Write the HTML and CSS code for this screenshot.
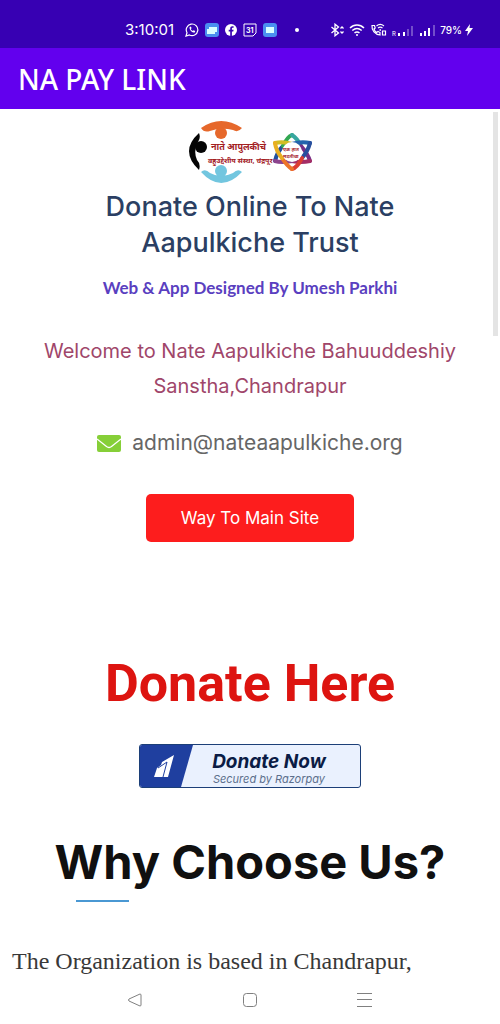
FILE: index.html
```html
<!doctype html>
<html lang="en">
    <head>
        <meta charset="UTF-8" />
        <meta name="viewport" content="width=device-width, initial-scale=1.0" />
        <title>NA PAY LINK</title>
        <link rel="stylesheet" href="styles.css">
    </head>
    <body>
        <div class="statusBar">
            <span class="clock">3:10:01</span>
            <div class="statusGroup">
                <svg width="14" height="14" viewBox="0 0 14 14" fill="none" stroke="#fff">
                    <path d="M1 13l1-3.3A5.8 5.8 0 1 1 4.4 12z" stroke-width="1.2" />
                    <path d="M4.5 4.2c0 3 2.3 5.3 5.3 5.3l.4-1.5-1.6-.8-.8.8c-1-.5-1.5-1-2-2l.8-.8-.7-1.6z" fill="#fff" stroke="none" />
                </svg>
                <svg width="14" height="14" viewBox="0 0 14 14">
                    <rect width="14" height="14" rx="3" fill="#4a8ff0" />
                    <path d="M4 4h8v5h-2v2H2V6h2z" fill="#d9ffff" />
                </svg>
                <svg width="12" height="12" viewBox="0 0 12 12">
                    <circle cx="6" cy="6" r="6" fill="#fff" />
                    <path d="M5.2 12V7.5H3.7V5.8h1.5V4.5c0-1.6.9-2.3 2.2-2.3h1.2v1.5h-.8c-.7 0-.9.3-.9.9v1.2h1.7l-.3 1.7H6.9V12z" fill="#3700b3" />
                </svg>
                <svg width="14" height="14" viewBox="0 0 14 14">
                    <path d="M1 1h12v9l-3 3H1z" fill="none" stroke="#fff" />
                    <text x="3" y="10" class="calendarDay">31</text>
                </svg>
                <svg width="14" height="14" viewBox="0 0 14 14">
                    <rect width="14" height="14" rx="3" fill="#4a8ff0" />
                    <rect x="3" y="4" width="8" height="6" fill="#d9ffff" />
                </svg>
                <svg width="16" height="14" viewBox="0 0 16 14">
                    <circle cx="14" cy="7" r="2" fill="#fff" />
                </svg>
            </div>
            <div class="statusGroup right">
                <svg width="14" height="14" viewBox="0 0 14 14" fill="none" stroke="#fff" stroke-width="1.3">
                    <path d="M1.5 4l7 6L5 12.8V1.2L8.5 4l-7 6" />
                    <path d="M10.5 5.5l1.5-1.5 1.5 1.5M10.5 8.5l1.500 1.500 1.500-1.500" />
                </svg>
                <svg width="16" height="14" viewBox="0 0 16 14" fill="none" stroke="#fff" stroke-width="1.5">
                    <path d="M1 5c4-4 10-4 14 0M3.300 7.500c3-2.600 6.400-2.600 9.400 0M5.500 10c1.600-1.400 3.400-1.400 5 0" />
                    <circle cx="8" cy="12" r="1" fill="#fff" stroke="none" />
                </svg>
                <svg width="17" height="14" viewBox="0 0 17 14" fill="none" stroke="#fff" stroke-width="1.2">
                    <path d="M2 2.500c-.5 5 3 9 8 9.500V9.500L8 8.500 6.500 9.500C5 8.500 4.500 7.500 4 6l1.200-1-.7-2.500z" />
                    <path d="M6.500 3c2.400-2 5-2 7.500 0M8 5c1.500-1.200 3-1.200 4.500 0M10.200 6v2M12.500 8h3v4h-3z" />
                </svg>
                <svg width="22" height="14" viewBox="0 0 22 14" fill="#fff">
                    <text x="0" y="13" class="roaming">R</text>
                    <path d="M6 10h2v3H6zM11 9h2v4h-2z" />
                    <path d="M15 6h2v7h-2zM19 3h2v10h-2z" opacity=".3" />
                </svg>
                <svg width="17" height="14" viewBox="0 0 17 14" fill="#fff">
                    <path d="M1 10h2v3H1zM5 8h2v5H5zM9 5h2v8H9z" />
                    <path d="M14 2h2v11h-2z" opacity=".3" />
                </svg>
                <span class="battery">79%</span>
                <svg width="8" height="14" viewBox="0 0 8 14">
                    <path d="M5 1L0 8h3l-1 5 6-8H4.500z" fill="#fff" />
                </svg>
            </div>
        </div>
        <header class="appBar">NA PAY LINK</header>
        <main class="content">
            <div class="scrollThumb"></div>
            <svg class="logo" width="126" height="64" viewBox="0 0 126 64">
                <path d="M14 8Q34-6 55 8Q51 13 46 10Q34 7 23 11Q17 13 14 8z" fill="#e6682b" />
                <path d="M12 13Q-8 31 12 50Q14 44 10 40Q6 31 11 22Q14 18 12 13z" fill="#050505" />
                <path d="M14 52Q34 74 55 52Q51 48 46 53Q34 59 23 53Q18 48 14 52z" fill="#72c6df" />
                <circle cx="34" cy="13" r="6" fill="#e6682b" />
                <circle cx="14" cy="27" r="6" fill="#050505" />
                <circle cx="34" cy="51" r="6" fill="#72c6df" />
                <text x="24" y="30" class="logoName">नाते आपुलकीचे</text>
                <text x="21" y="43" class="logoSub">बहुउद्देशीय संस्था, चंद्रपूर</text>
                <g fill="none" stroke-width="4" stroke-linecap="round">
                    <path d="M88 41Q90 32 96 26" stroke="#214f9d" />
                    <path d="M96 26Q100 17 105 15" stroke="#32a852" />
                    <path d="M105 15Q110 18 114 26" stroke="#37a7a0" />
                    <path d="M114 26Q121 34 123 41" stroke="#782f86" />
                    <path d="M123 41Q114 43 105 41" stroke="#a52e65" />
                    <path d="M105 41Q94 43 88 41" stroke="#8c448d" />
                    <path d="M88 23Q96 21 105 24" stroke="#d1bd24" />
                    <path d="M105 24Q114 21 123 23" stroke="#2464ad" />
                    <path d="M123 23Q121 31 115 38" stroke="#294f9e" />
                    <path d="M115 38Q110 48 105 49" stroke="#dc3e33" />
                    <path d="M105 49Q100 46 95 38" stroke="#ed7429" />
                    <path d="M95 38Q89 31 88 23" stroke="#e9af22" />
                </g>
                <circle cx="105" cy="32" r="10" fill="#fff" />
                <text x="96" y="31" class="starText">एक हात</text>
                <text x="96" y="38" class="starText">मदतीचा</text>
            </svg>
            <h1 class="title">Donate Online To Nate Aapulkiche Trust</h1>
            <p class="tagline">Web &amp; App Designed By Umesh Parkhi</p>
            <p class="welcome">Welcome to Nate Aapulkiche Bahuuddeshiy Sanstha,Chandrapur</p>
            <a class="email" href="mailto:admin@nateaapulkiche.org">
                <svg width="24" height="17" viewBox="0 0 24 17">
                    <rect width="24" height="17" rx="2" fill="#86cf38" />
                    <path d="M0 4l9.500 7.500q2.500 2 5 0L24 4" fill="none" stroke="#fff" stroke-width="1.3" />
                </svg>
                admin@nateaapulkiche.org
            </a>
            <button class="mainSite" type="button">Way To Main Site</button>
            <h2 class="donateHere">Donate Here</h2>
            <button class="razorpay" type="button">
                <svg width="54" height="42" viewBox="0 0 54 42">
                    <path d="M0 0h53L41 42H0z" fill="#1f3f9f" />
                    <path d="M34 10l-6 22H14l3-9 4-3 1-3z" fill="#fff" />
                    <path d="M18 23l9-6-4 15" fill="none" stroke="#1f3f9f" />
                </svg>
                <span class="razorpayText">
                    <strong>Donate Now</strong>
                    <small>Secured by Razorpay</small>
                </span>
            </button>
            <h2 class="why">Why Choose Us?</h2>
            <p class="about">The Organization is based in Chandrapur,</p>
        </main>
        <nav class="navBar">
            <button type="button" aria-label="Back">
                <svg width="16" height="16" viewBox="0 0 16 16">
                    <path d="M13 2L2 7q-1 1 0 2l11 5q1 0 1-1V3q0-1-1-1z" />
                </svg>
            </button>
            <button type="button" aria-label="Home">
                <svg width="16" height="16" viewBox="0 0 16 16">
                    <rect x="1.500" y="1.500" width="13" height="13" rx="3" />
                </svg>
            </button>
            <button type="button" aria-label="Recent apps">
                <svg width="16" height="16" viewBox="0 0 16 16">
                    <path d="M0 1.500h15M0 7.500h15M0 14.500h15" />
                </svg>
            </button>
        </nav>
    </body>
</html>
```
FILE: styles.css
```css
* {
    box-sizing: border-box;
}
body {
    margin: 0;
    min-height: 100vh;
    display: flex;
    flex-direction: column;
    background: #fff;
    font-family: Inter, "Noto Sans", sans-serif;
}
h1,
h2,
p {
    margin: 0;
}
button {
    font-family: inherit;
    cursor: pointer;
}
.statusBar {
    height: 48px;
    padding: 12px 27px 0 125px;
    display: flex;
    align-items: center;
    background: #3700b3;
    color: #fff;
}
.clock {
    width: 60px;
    font-size: 15px;
    line-height: 16px;
}
.statusGroup {
    display: flex;
    align-items: center;
    gap: 6px;
}
.statusGroup.right {
    margin-left: auto;
    gap: 5px;
}
.battery {
    margin: 0 -2px 0 -1px;
    font-size: 10px;
    font-weight: 500;
}
.calendarDay {
    font-size: 7px;
    font-weight: bold;
    fill: #fff;
}
.roaming {
    font-size: 6px;
}
.appBar {
    height: 61px;
    padding: 0 18px;
    display: flex;
    align-items: center;
    background: #6200ee;
    color: #fff;
    font-family: "Noto Sans", sans-serif;
    font-size: 28px;
    font-weight: 500;
}
.content {
    position: relative;
    flex: 1;
    padding: 11px 12px 0;
    display: flex;
    flex-direction: column;
    align-items: center;
    text-align: center;
}
.scrollThumb {
    position: absolute;
    top: 3px;
    right: 2px;
    width: 5px;
    height: 224px;
    background: #e4e4e4;
}
.logoName,
.logoSub,
.starText {
    font-family: "Noto Sans", sans-serif;
    font-weight: bold;
    fill: #a3201f;
}
.logoName {
    font-size: 9px;
}
.logoSub {
    font-size: 7px;
}
.starText {
    font-size: 5px;
}
.title {
    max-width: 320px;
    margin-top: 5px;
    color: #2b3f63;
    font-size: 27px;
    font-weight: 500;
    line-height: 36px;
}
.tagline {
    margin-top: 15px;
    color: #5a3fc0;
    font-family: Lato, sans-serif;
    font-size: 17px;
    font-weight: bold;
    line-height: 24px;
}
.welcome {
    margin-top: 34px;
    color: #a0466a;
    font-size: 20px;
    line-height: 35px;
}
.email {
    margin-top: 27px;
    display: flex;
    align-items: center;
    gap: 11px;
    color: #666;
    font-size: 21px;
    line-height: 24px;
    text-decoration: none;
}
.mainSite {
    margin-top: 39px;
    padding: 12px 35px;
    border: none;
    border-radius: 5px;
    background: #fd1d1d;
    color: #fff;
    font-size: 17px;
    line-height: 24px;
}
.donateHere {
    margin-top: 112px;
    color: #dd1410;
    font-family: Roboto, sans-serif;
    font-size: 52px;
    line-height: 60px;
}
.razorpay {
    margin-top: 30px;
    padding: 0;
    width: 222px;
    display: flex;
    border: 1px solid #1c3f78;
    border-radius: 3px;
    overflow: hidden;
    background: #eaf1fe;
}
.razorpayText {
    flex: 1;
    padding: 6px 16px 0 0;
    display: flex;
    flex-direction: column;
    font-style: italic;
}
.razorpayText strong {
    color: #0b1c45;
    font-size: 19px;
    line-height: 21px;
}
.razorpayText small {
    color: #5c6f8c;
    font-size: 11px;
    line-height: 14px;
}
.why {
    margin-top: 44px;
    color: #101010;
    font-size: 47px;
    line-height: 60px;
}
.why::after {
    content: "";
    display: block;
    width: 53px;
    height: 2px;
    margin: 8px 0 0 21px;
    background: #4a98d3;
}
.about {
    align-self: flex-start;
    margin-top: 44px;
    color: #383838;
    font-family: "Liberation Serif", serif;
    font-size: 24px;
    line-height: 30px;
}
.navBar {
    height: 48px;
    padding: 0 77px;
    display: flex;
    align-items: center;
    justify-content: space-between;
}
.navBar button {
    width: 116px;
    padding: 0;
    display: flex;
    justify-content: center;
    border: none;
    background: none;
}
.navBar svg {
    fill: none;
    stroke: #808080;
}
```
